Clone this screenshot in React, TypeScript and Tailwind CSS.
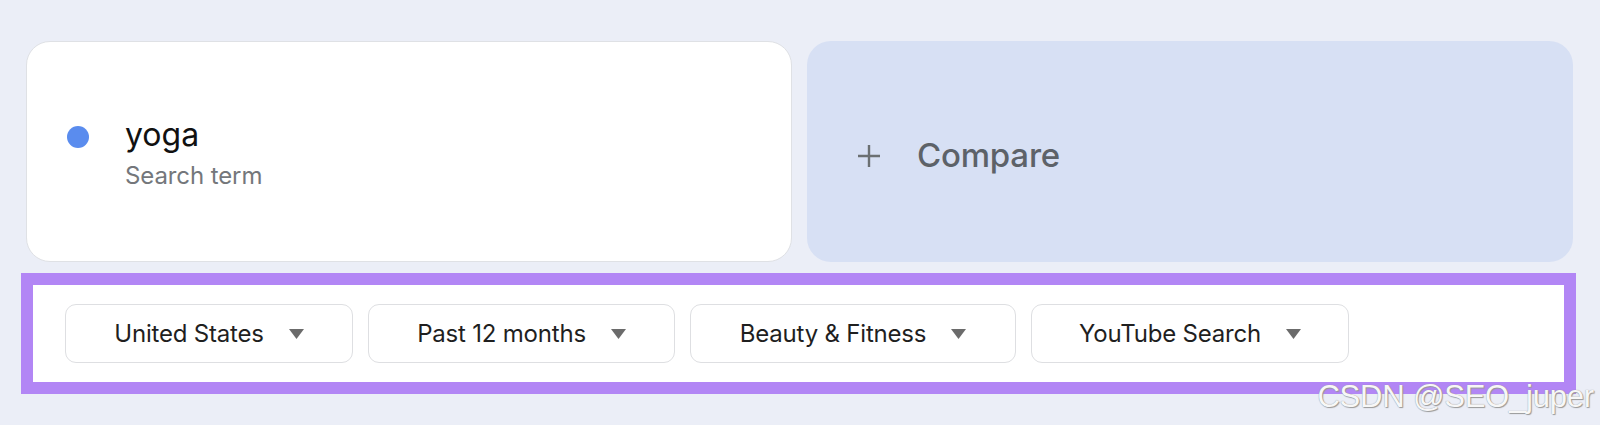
import React from 'react';

const filters = [
  { label: 'United States', width: 'w-[288px]' },
  { label: 'Past 12 months', width: 'w-[307px]' },
  { label: 'Beauty & Fitness', width: 'w-[326px]' },
  { label: 'YouTube Search', width: 'w-[318px]' },
];

function Caret() {
  return (
    <svg width="15" height="10" viewBox="0 0 15 10" className="shrink-0">
      <path d="M0 0 L15 0 L7.5 10 Z" fill="#6b6b6b" />
    </svg>
  );
}

function PlusIcon() {
  return (
    <svg width="24" height="24" viewBox="0 0 24 24" className="shrink-0">
      <path d="M12 1 V23 M1 12 H23" stroke="#6b7072" strokeWidth="2.4" fill="none" />
    </svg>
  );
}

function FilterButton({ label, width }: { label: string; width: string }) {
  return (
    <div
      className={`${width} h-[59px] flex items-center justify-center gap-[25px] rounded-[11px] border border-[#dedfe2] bg-white`}
    >
      <span className="text-[24px] text-[#1f1f1f] tracking-[-0.2px]">{label}</span>
      <Caret />
    </div>
  );
}

export default function App() {
  return (
    <div className="relative w-[1600px] h-[425px] bg-[#ebeef7] font-['Inter',sans-serif] overflow-hidden">
      {/* term cards */}
      <div className="flex gap-[15px] pt-[41px] pl-[26px]">
        <div className="w-[766px] h-[221px] rounded-[24px] border border-[#dfe1e5] bg-white flex items-center pl-[40px]">
          <div className="flex items-start gap-[36px] mt-[4px]">
            <div className="w-[22px] h-[22px] rounded-full bg-[#5a8cee] mt-[11px]" />
            <div className="flex flex-col">
              <span className="text-[32px] leading-[40px] text-[#111]">yoga</span>
              <span className="text-[24px] leading-[34px] mt-[4px] text-[#74777b] tracking-[-0.1px]">Search term</span>
            </div>
          </div>
        </div>
        <div className="w-[766px] h-[221px] rounded-[24px] bg-[#d7e0f4] flex items-center pl-[50px] pt-[9px]">
          <div className="flex items-center gap-[36px]">
            <PlusIcon />
            <span className="text-[33px] text-[#5d6268] font-medium tracking-[-0.2px]">Compare</span>
          </div>
        </div>
      </div>

      {/* highlighted filter bar */}
      <div className="mt-[11px] ml-[21px] w-[1555px] h-[121px] border-[12px] border-[#b286f5] bg-white flex items-center gap-[15px] pl-[32px]">
        {filters.map((f) => (
          <FilterButton key={f.label} label={f.label} width={f.width} />
        ))}
      </div>

      {/* watermark */}
      <div className="absolute right-[6px] top-[374px] font-['Liberation_Sans',sans-serif] text-[31px] text-[#f7f7f7] tracking-[-0.2px] [text-shadow:0_0_1px_#8a8a8a,1px_1px_1px_#9a9a9a]">
        CSDN @SEO_juper
      </div>
    </div>
  );
}
